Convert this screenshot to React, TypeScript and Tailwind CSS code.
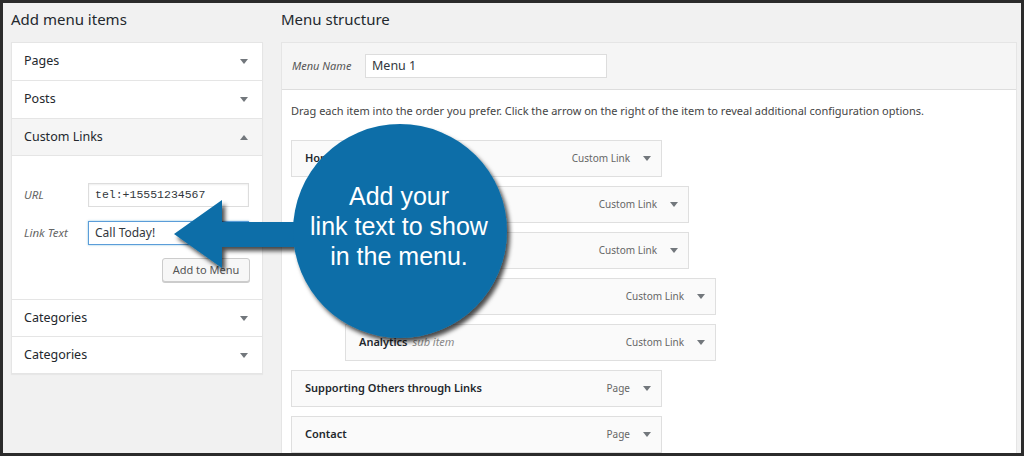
import React from "react";

const Tri = ({ up = false }: { up?: boolean }) => (
  <svg width="8" height="5" viewBox="0 0 8 5" className="shrink-0">
    <path d={up ? "M0 5 L4 0 L8 5 Z" : "M0 0 L8 0 L4 5 Z"} fill="#72777c" />
  </svg>
);

const AccRow = ({ title, up = false, h, bg }: { title: string; up?: boolean; h: string; bg: string }) => (
  <div className={`${h} ${bg} flex items-center justify-between pl-[12px] pr-[14px] border-b border-[#e5e5e5]`}>
    <span className="text-[12.5px] text-[#23282d]">{title}</span>
    <Tri up={up} />
  </div>
);

const indents = ["ml-0", "ml-[27px]", "ml-[54px]"];

const items = [
  { t: "Home", sub: false, type: "Custom Link", indent: 0 },
  { t: "About Us", sub: true, type: "Custom Link", indent: 1 },
  { t: "Services", sub: true, type: "Custom Link", indent: 1 },
  { t: "SEO", sub: true, type: "Custom Link", indent: 2 },
  { t: "Analytics", sub: true, type: "Custom Link", indent: 2 },
  { t: "Supporting Others through Links", sub: false, type: "Page", indent: 0 },
  { t: "Contact", sub: false, type: "Page", indent: 0 },
];

export default function App() {
  return (
    <div className="relative w-[1024px] h-[456px] bg-[#2b2b2b] p-[3px] overflow-hidden font-['Noto_Sans',sans-serif]">
      <div className="flex h-full bg-[#f1f1f1] overflow-hidden">
        {/* Left column */}
        <div className="w-[278px] shrink-0 pl-[8px]">
          <div className="h-[39px] pt-[6px] leading-[20px] text-[15px] text-[#23282d]">Add menu items</div>
          <div className="w-[252px] bg-white border border-[#e5e5e5] border-b-0 shadow-[0_1px_1px_rgba(0,0,0,0.04)]">
            <AccRow title="Pages" h="h-[38px]" bg="bg-white" />
            <AccRow title="Posts" h="h-[38px]" bg="bg-white" />
            <AccRow title="Custom Links" up h="h-[37px]" bg="bg-[#f5f5f5]" />
            <div className="h-[144px] border-b border-[#e5e5e5] pt-[27px] pl-[12px] pr-[13px] flex flex-col">
              <div className="flex items-center h-[24px]">
                <span className="w-[64px] italic text-[11.5px] text-[#666]">URL</span>
                <div className="flex-1 h-[24px] border border-[#ddd] bg-white flex items-center pl-[6px] font-['Liberation_Mono',monospace] text-[11.5px] text-[#32373c] shadow-[inset_0_1px_2px_rgba(0,0,0,0.07)]">
                  tel:+15551234567
                </div>
              </div>
              <div className="flex items-center h-[24px] mt-[14px]">
                <span className="w-[64px] italic text-[11.5px] text-[#666]">Link Text</span>
                <div className="flex-1 h-[24px] border border-[#5b9dd9] bg-white flex items-center pl-[6px] text-[12px] text-[#32373c] shadow-[0_0_2px_rgba(30,140,190,0.5)]">
                  Call Today!
                </div>
              </div>
              <div className="flex justify-end mt-[13px]">
                <div className="w-[88px] h-[24px] mr-[-1px] rounded-[3px] border border-[#ccc] bg-[#f7f7f7] shadow-[0_1px_0_#ccc] flex items-center justify-center text-[11px] text-[#555]">
                  Add to Menu
                </div>
              </div>
            </div>
            <AccRow title="Categories" h="h-[37px]" bg="bg-white" />
            <AccRow title="Categories" h="h-[37px]" bg="bg-white" />
          </div>
        </div>

        {/* Right column */}
        <div className="flex-1 pr-[4px]">
          <div className="h-[39px] pt-[6px] leading-[20px] text-[15px] text-[#23282d]">Menu structure</div>
          <div className="h-[420px] border border-[#e5e5e5] bg-white">
            <div className="h-[47px] bg-[#f5f5f5] border-b border-[#dddddd] flex items-center pl-[10px]">
              <span className="w-[73px] italic text-[11px] text-[#555]">Menu Name</span>
              <div className="w-[242px] h-[24px] border border-[#ddd] bg-white flex items-center pl-[6px] text-[12.5px] text-[#32373c]">
                Menu 1
              </div>
            </div>
            <div className="pl-[9px] pt-[11px]">
              <div className="h-[20px] leading-[20px] text-[11px] text-[#444] mb-[19px] whitespace-nowrap">
                Drag each item into the order you prefer. Click the arrow on the right of the item to reveal additional configuration options.
              </div>
              <div className="flex flex-col gap-[9px]">
                {items.map((it, i) => (
                  <div
                    key={i}
                    className={`${indents[it.indent]} w-[371px] h-[37px] border border-[#dfdfdf] bg-[#fafafa] flex items-center justify-between pl-[13px] pr-[10px]`}
                  >
                    <span className="text-[11px] font-semibold text-[#23282d] whitespace-nowrap">
                      {it.t}
                      {it.sub && <span className="ml-[5px] italic font-normal text-[#888]">sub item</span>}
                    </span>
                    <span className="flex items-center">
                      <span className="text-[10px] text-[#666]">{it.type}</span>
                      <span className="ml-[13px]"><Tri /></span>
                    </span>
                  </div>
                ))}
              </div>
            </div>
          </div>
        </div>
      </div>

      {/* Callout overlay */}
      <svg className="absolute left-0 top-0 pointer-events-none" width="1024" height="456">
        <defs>
          <filter id="sh" x="-20%" y="-20%" width="150%" height="150%">
            <feDropShadow dx="3" dy="4" stdDeviation="2" floodColor="#000" floodOpacity="0.7" />
          </filter>
        </defs>
        <g filter="url(#sh)" fill="#0a6ea8">
          <path d="M174 234 L222 200 L222 222 L320 222 L320 247 L222 247 L222 268 Z" />
          <circle cx="400" cy="231" r="107" />
        </g>
      </svg>
      <div className="absolute left-[292px] top-[181px] w-[214px] text-center text-white text-[25px] leading-[30px] font-['Liberation_Sans',Arial,sans-serif]">
        <div>Add your</div>
        <div>link text to show</div>
        <div>in the menu.</div>
      </div>
    </div>
  );
}
